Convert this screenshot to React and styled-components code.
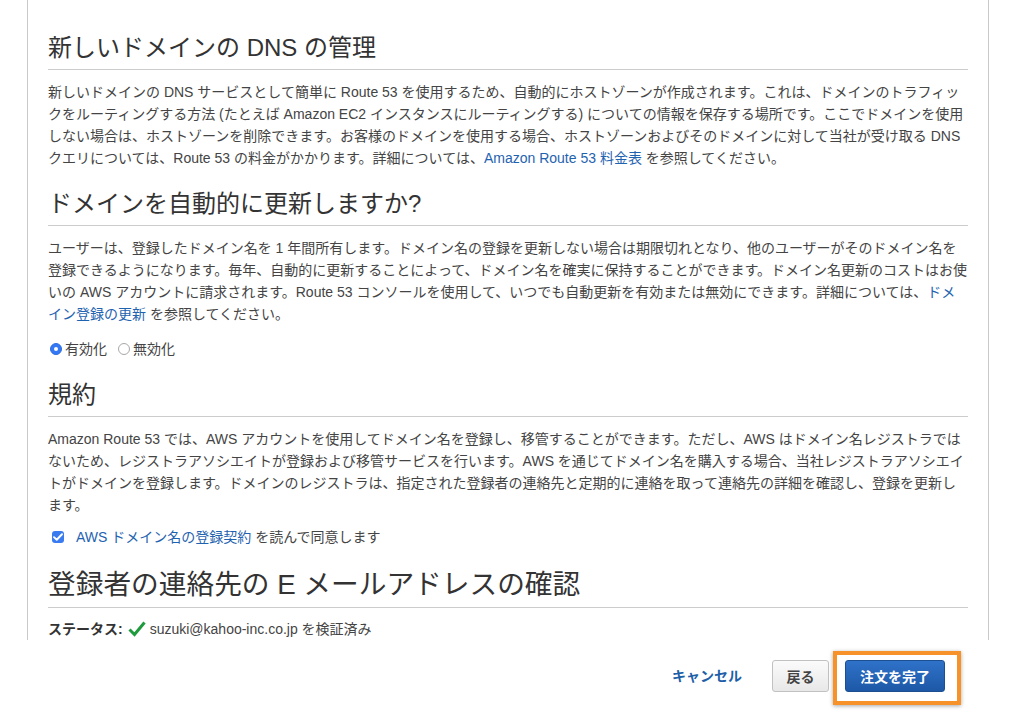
import styled, { createGlobalStyle } from 'styled-components'

const GlobalStyle = createGlobalStyle`
    html, body {
        margin: 0;
        padding: 0;
        background: #fff;
    }
    body {
        font-family: "Liberation Sans", "Noto Sans CJK JP", sans-serif;
        color: #444;
    }
`

const Page = styled.div`
    width: 1030px;
    height: 720px;
    overflow: hidden;
    display: flex;
    flex-direction: column;
`

const Panel = styled.div`
    box-sizing: border-box;
    margin-left: 27px;
    width: 962px;
    height: 640px;
    flex-shrink: 0;
    padding: 33px 20px 0;
    border-left: 1px solid #c9c9c9;
    border-right: 1px solid #c9c9c9;
    overflow: hidden;
`

const Section = styled.section`
    & + & {
        margin-top: 20px;
    }
`

const Heading = styled.h2`
    margin: 0;
    font-weight: 400;
    color: #333;
    font-size: ${(p) => (p.$large ? '27.7px' : '24px')};
    line-height: ${(p) => (p.$large ? '34px' : '30px')};
    padding-bottom: ${(p) => (p.$large ? '5px' : '6px')};
    border-bottom: 1px solid #cccccc;
`

const Paragraph = styled.p`
    margin: 11px 0 0;
    font-size: 14px;
    line-height: 22px;
    white-space: nowrap;
`

const Link = styled.a`
    color: #1f63b0;
    text-decoration: none;
`

const OptionRow = styled.div`
    display: flex;
    align-items: center;
    margin-top: 13px;
    padding-left: 2px;
    font-size: 14px;
    line-height: 22px;
`

const RadioLabel = styled.label`
    display: inline-flex;
    align-items: center;
    margin-right: 11px;
`

const Radio = styled.span`
    box-sizing: border-box;
    position: relative;
    width: 12px;
    height: 12px;
    border-radius: 50%;
    margin-right: 3px;
    background: ${(p) => (p.$checked ? '#3478f6' : '#fff')};
    border: 1px solid ${(p) => (p.$checked ? '#2f6de0' : '#a8a8a8')};

    &::after {
        content: '';
        display: ${(p) => (p.$checked ? 'block' : 'none')};
        position: absolute;
        left: 3px;
        top: 3px;
        width: 4px;
        height: 4px;
        border-radius: 50%;
        background: #fff;
    }
`

const CheckRow = styled.div`
    display: flex;
    align-items: center;
    gap: 12px;
    margin-top: 10px;
    padding-left: 4px;
    font-size: 14px;
    line-height: 22px;
`

const Checkbox = styled.span`
    display: inline-flex;
    align-items: center;
    justify-content: center;
    width: 12px;
    height: 12px;
    border-radius: 3px;
    background: #3a7bf0;
`

const StatusRow = styled.div`
    display: flex;
    align-items: center;
    margin-top: 10px;
    font-size: 14px;
    line-height: 22px;
`

const Label = styled.strong`
    color: #333;
    font-weight: 700;
`

const Footer = styled.div`
    flex: 1;
    display: flex;
    justify-content: flex-end;
    align-items: flex-start;
    padding: 20px 69px 0 0;
`

const CancelLink = styled.a`
    font-size: 14px;
    font-weight: 700;
    line-height: 32px;
    color: #1e5fa8;
    text-decoration: none;
    margin-right: 30px;
`

const Button = styled.button`
    box-sizing: border-box;
    height: 32px;
    width: ${(p) => p.$width}px;
    border-radius: 3px;
    font-family: inherit;
    font-size: 14px;
    font-weight: 700;
    padding: 0;
    cursor: pointer;
    color: ${(p) => (p.$primary ? '#fff' : '#444')};
    border: 1px solid ${(p) => (p.$primary ? '#1b4f91' : '#c1c1c1')};
    background: ${(p) =>
        p.$primary
            ? 'linear-gradient(#2f72c9, #1d58a6)'
            : 'linear-gradient(#fbfbfb, #e8e8e8)'};
`

const Highlight = styled.div`
    margin: -9px 0 0 4px;
    padding: 5px 12px 9px 8px;
    border: 4px solid #f7922a;
    box-shadow: 0 1px 4px rgba(0, 0, 0, 0.35);
`

const TickIcon = () => (
    <svg width="14" height="8" viewBox="0 0 14 10">
        <path d="M2 5.2 L5.4 8.4 L12 1.6" fill="none" stroke="#fff" strokeWidth="2.4" strokeLinecap="round" strokeLinejoin="round" />
    </svg>
)

const GreenCheck = () => (
    <svg width="18" height="16" viewBox="0 0 18 16" style={{ margin: '0 4px 0 5px' }}>
        <path d="M1.5 8.5 L6.5 13.5 L16.5 1.5" fill="none" stroke="#1f9a3c" strokeWidth="3" strokeLinejoin="miter" />
    </svg>
)

export default function App() {
    return (
        <Page>
            <GlobalStyle />
            <Panel>
                <Section>
                    <Heading>新しいドメインの DNS の管理</Heading>
                    <Paragraph>
                        新しいドメインの DNS サービスとして簡単に Route 53 を使用するため、自動的にホストゾーンが作成されます。これは、ドメインのトラフィッ<br />
                        クをルーティングする方法 (たとえば Amazon EC2 インスタンスにルーティングする) についての情報を保存する場所です。ここでドメインを使用<br />
                        しない場合は、ホストゾーンを削除できます。お客様のドメインを使用する場合、ホストゾーンおよびそのドメインに対して当社が受け取る DNS<br />
                        クエリについては、Route 53 の料金がかかります。詳細については、<Link href="#">Amazon Route 53 料金表</Link> を参照してください。
                    </Paragraph>
                </Section>

                <Section>
                    <Heading>ドメインを自動的に更新しますか?</Heading>
                    <Paragraph>
                        ユーザーは、登録したドメイン名を 1 年間所有します。ドメイン名の登録を更新しない場合は期限切れとなり、他のユーザーがそのドメイン名を<br />
                        登録できるようになります。毎年、自動的に更新することによって、ドメイン名を確実に保持することができます。ドメイン名更新のコストはお使<br />
                        いの AWS アカウントに請求されます。Route 53 コンソールを使用して、いつでも自動更新を有効または無効にできます。詳細については、<Link href="#">ドメ</Link><br />
                        <Link href="#">イン登録の更新</Link> を参照してください。
                    </Paragraph>
                    <OptionRow>
                        <RadioLabel>
                            <Radio $checked />
                            有効化
                        </RadioLabel>
                        <RadioLabel>
                            <Radio />
                            無効化
                        </RadioLabel>
                    </OptionRow>
                </Section>

                <Section>
                    <Heading>規約</Heading>
                    <Paragraph>
                        Amazon Route 53 では、AWS アカウントを使用してドメイン名を登録し、移管することができます。ただし、AWS はドメイン名レジストラでは<br />
                        ないため、レジストラアソシエイトが登録および移管サービスを行います。AWS を通じてドメイン名を購入する場合、当社レジストラアソシエイ<br />
                        トがドメインを登録します。ドメインのレジストラは、指定された登録者の連絡先と定期的に連絡を取って連絡先の詳細を確認し、登録を更新し<br />
                        ます。
                    </Paragraph>
                    <CheckRow>
                        <Checkbox>
                            <TickIcon />
                        </Checkbox>
                        <span>
                            <Link href="#">AWS ドメイン名の登録契約</Link> を読んで同意します
                        </span>
                    </CheckRow>
                </Section>

                <Section>
                    <Heading $large>登録者の連絡先の E メールアドレスの確認</Heading>
                    <StatusRow>
                        <Label>ステータス:</Label>
                        <GreenCheck />
                        suzuki@kahoo-inc.co.jp を検証済み
                    </StatusRow>
                </Section>
            </Panel>

            <Footer>
                <CancelLink href="#">キャンセル</CancelLink>
                <Button $width={57}>戻る</Button>
                <Highlight>
                    <Button $primary $width={100}>注文を完了</Button>
                </Highlight>
            </Footer>
        </Page>
    )
}
